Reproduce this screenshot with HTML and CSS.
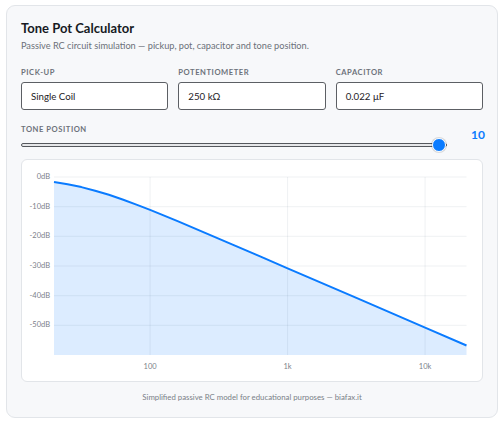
FILE: index.html
```html
<!DOCTYPE html>
<html lang="en">
<head>
<meta charset="utf-8">
<title>Tone Pot Calculator</title>
<link rel="stylesheet" href="styles.css">
</head>
<body>
<div class="card">
  <h1 class="title">Tone Pot Calculator</h1>
  <p class="subtitle">Passive RC circuit simulation — pickup, pot, capacitor and tone position.</p>

  <div class="fields">
    <div class="field">
      <label class="label">Pick-up</label>
      <div class="select">Single Coil</div>
    </div>
    <div class="field">
      <label class="label">Potentiometer</label>
      <div class="select">250 kΩ</div>
    </div>
    <div class="field">
      <label class="label">Capacitor</label>
      <div class="select">0.022 μF</div>
    </div>
  </div>

  <div class="tone">
    <div class="tone-main">
      <label class="label">Tone position</label>
      <input class="range" type="range" min="0" max="10" step="1" value="10">
    </div>
    <div class="tone-value">10</div>
  </div>

  <div class="chart">
    <svg class="plot" width="460" height="221" viewBox="0 0 460 221">
      <!-- response fill under the curve -->
      <path class="area" d="M32,22.0 L45.6,24.2 L59.4,27.1 L73.1,30.7 L86.9,34.8 L100.6,39.5 L114.4,44.6 L128.1,49.9 L155.6,61.2 L183.1,72.8 L210.6,84.6 L238.1,96.4 L265.6,108.3 L334.4,137.9 L403.1,167.6 L444.5,185.5 L444.5,195 L32,195 Z"/>
      <!-- grid -->
      <g class="grid">
        <line x1="32" y1="17" x2="444.5" y2="17"/>
        <line x1="32" y1="46.7" x2="444.5" y2="46.7"/>
        <line x1="32" y1="76.3" x2="444.5" y2="76.3"/>
        <line x1="32" y1="106" x2="444.5" y2="106"/>
        <line x1="32" y1="135.7" x2="444.5" y2="135.7"/>
        <line x1="32" y1="165.3" x2="444.5" y2="165.3"/>
        <line x1="128.1" y1="17" x2="128.1" y2="195"/>
        <line x1="265.6" y1="17" x2="265.6" y2="195"/>
        <line x1="403.1" y1="17" x2="403.1" y2="195"/>
      </g>
      <!-- frequency response -->
      <path class="curve" d="M32,22.0 L45.6,24.2 L59.4,27.1 L73.1,30.7 L86.9,34.8 L100.6,39.5 L114.4,44.6 L128.1,49.9 L155.6,61.2 L183.1,72.8 L210.6,84.6 L238.1,96.4 L265.6,108.3 L334.4,137.9 L403.1,167.6 L444.5,185.5"/>
      <!-- axis labels -->
      <g class="ylab">
        <text x="28" y="17">0dB</text>
        <text x="28" y="46.7">-10dB</text>
        <text x="28" y="76.3">-20dB</text>
        <text x="28" y="106">-30dB</text>
        <text x="28" y="135.7">-40dB</text>
        <text x="28" y="165.3">-50dB</text>
      </g>
      <g class="xlab">
        <text x="128.1" y="207">100</text>
        <text x="265.6" y="207">1k</text>
        <text x="403.1" y="207">10k</text>
      </g>
    </svg>
  </div>

  <p class="footer">Simplified passive RC model for educational purposes — biafax.it</p>
</div>
</body>
</html>
```

FILE: styles.css
```css
html, body {
  margin: 0;
  padding: 0;
  background: #ffffff;
}

body {
  font-family: Lato, "Noto Sans", sans-serif;
  color: #1f2328;
}

.card {
  margin: 5px 5px 8px 6px;
  padding: 13px 14px 14px 14px;
  background: #f7f8fa;
  border: 1px solid #e2e5e9;
  border-radius: 9px;
}

.title {
  margin: 0;
  font-size: 13px;
  line-height: 18px;
  font-weight: 700;
  color: #161a1f;
}

.subtitle {
  margin: 2px 0 0;
  font-size: 9.2px;
  line-height: 14px;
  color: #6b7079;
}

.fields {
  display: grid;
  grid-template-columns: 1fr 1fr 1fr;
  gap: 10px;
  margin-top: 13px;
}

.field {
  display: flex;
  flex-direction: column;
  gap: 4px;
}

.label {
  display: block;
  font-size: 7.6px;
  line-height: 12px;
  font-weight: 700;
  letter-spacing: 0.55px;
  text-transform: uppercase;
  color: #6d727b;
}

.select {
  box-sizing: border-box;
  height: 28px;
  padding: 0 9px;
  display: flex;
  align-items: center;
  background: #ffffff;
  border: 1px solid #5c5f64;
  border-radius: 3px;
  font-size: 9.7px;
  color: #1d2126;
}

.tone {
  display: flex;
  align-items: center;
  gap: 24px;
  margin-top: 13px;
}

.tone-main {
  flex: 1;
  display: flex;
  flex-direction: column;
  gap: 3px;
}

.tone-value {
  width: 12px;
  margin-top: -6px;
  font-size: 12px;
  font-weight: 700;
  color: #0a7bff;
  text-align: right;
}

.range {
  -webkit-appearance: none;
  appearance: none;
  display: block;
  width: 100%;
  height: 14px;
  margin: 0;
  background: transparent;
}

.range::-webkit-slider-runnable-track {
  box-sizing: border-box;
  height: 4px;
  background: #e6e7e9;
  border: 1px solid #55585d;
  border-radius: 2px;
}

.range::-webkit-slider-thumb {
  -webkit-appearance: none;
  appearance: none;
  width: 14px;
  height: 14px;
  margin-top: -6px;
  border-radius: 50%;
  background: #0a7bff;
  border: 1.5px solid #ffffff;
  box-shadow: 0 0 0 1px rgba(0, 0, 0, 0.12);
  box-sizing: border-box;
}

.chart {
  margin-top: 7px;
  background: #ffffff;
  border: 1px solid #e2e5e9;
  border-radius: 6px;
  overflow: hidden;
}

.plot {
  display: block;
}

.area {
  fill: rgba(10, 123, 255, 0.14);
}

.grid line {
  stroke: rgba(30, 50, 80, 0.07);
  stroke-width: 1;
}

.curve {
  fill: none;
  stroke: #0a7bff;
  stroke-width: 2;
  stroke-linejoin: round;
}

.ylab text,
.xlab text {
  font-family: Lato, "Noto Sans", sans-serif;
  font-size: 7.5px;
  fill: #7c818a;
  dominant-baseline: middle;
}

.ylab text {
  text-anchor: end;
}

.xlab text {
  text-anchor: middle;
}

.footer {
  margin: 9px 0 0;
  text-align: center;
  font-size: 7.8px;
  line-height: 12px;
  color: #7a7f87;
}
```
